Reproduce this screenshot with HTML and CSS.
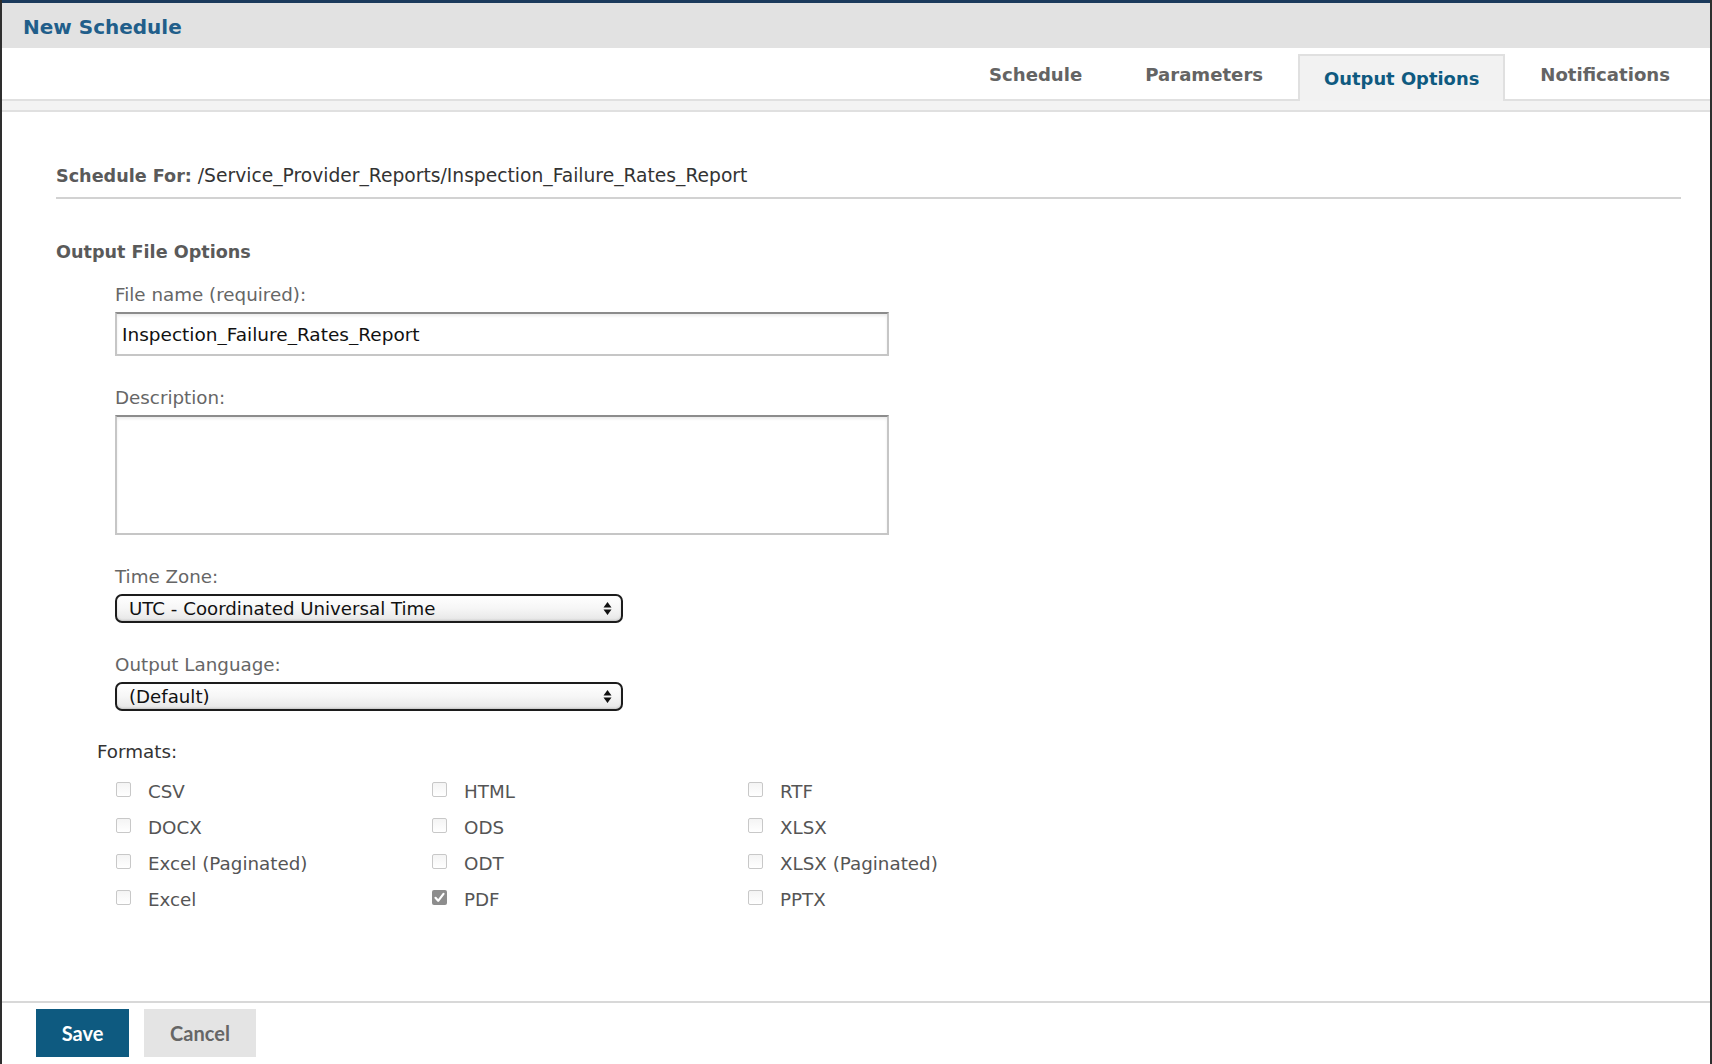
FILE: index.html
```html
<!doctype html>
<html lang="en">
<head>
  <meta charset="UTF-8">
  <meta name="viewport" content="width=device-width, initial-scale=1.0">
  <title>New Schedule</title>
  <link rel="stylesheet" href="styles.css">
</head>
<body>
  <div class="window">
    <div class="title-bar">
      <h1>New Schedule</h1>
    </div>

    <ul class="tabs">
      <li>Schedule</li>
      <li>Parameters</li>
      <li class="active">Output Options</li>
      <li>Notifications</li>
    </ul>
    <div class="tab-strip"></div>

    <div class="content">
      <div class="schedule-for">
        <b>Schedule For:</b> /Service_Provider_Reports/Inspection_Failure_Rates_Report
      </div>

      <h2>Output File Options</h2>

      <div class="fields">
        <label class="field-label first" for="file_name">File name (required):</label>
        <input type="text" id="file_name" class="text-input" value="Inspection_Failure_Rates_Report">

        <label class="field-label" for="description">Description:</label>
        <textarea id="description" class="text-area"></textarea>

        <label class="field-label tz" for="time_zone">Time Zone:</label>
        <div class="select-wrap">
          <select id="time_zone">
            <option>UTC - Coordinated Universal Time</option>
          </select>
          <svg class="arrows" width="9" height="15" viewBox="0 0 9 15">
            <path d="M4.5 1 L8.5 6.5 L0.5 6.5 Z M0.5 8.5 L8.5 8.5 L4.5 14 Z" fill="#111"/>
          </svg>
        </div>

        <label class="field-label lang" for="language">Output Language:</label>
        <div class="select-wrap">
          <select id="language">
            <option>(Default)</option>
          </select>
          <svg class="arrows" width="9" height="15" viewBox="0 0 9 15">
            <path d="M4.5 1 L8.5 6.5 L0.5 6.5 Z M0.5 8.5 L8.5 8.5 L4.5 14 Z" fill="#111"/>
          </svg>
        </div>
      </div>

      <div class="formats-title">Formats:</div>
      <div class="formats">
        <label class="fmt"><span class="box"></span>CSV</label>
        <label class="fmt"><span class="box"></span>HTML</label>
        <label class="fmt"><span class="box"></span>RTF</label>
        <label class="fmt"><span class="box"></span>DOCX</label>
        <label class="fmt"><span class="box"></span>ODS</label>
        <label class="fmt"><span class="box"></span>XLSX</label>
        <label class="fmt"><span class="box"></span>Excel (Paginated)</label>
        <label class="fmt"><span class="box"></span>ODT</label>
        <label class="fmt"><span class="box"></span>XLSX (Paginated)</label>
        <label class="fmt"><span class="box"></span>Excel</label>
        <label class="fmt">
          <span class="box checked">
            <svg width="15" height="15" viewBox="0 0 15 15">
              <path d="M3.5 7.8 L6.2 10.8 L11.5 3.8" fill="none" stroke="#fff" stroke-width="2.2" stroke-linecap="round" stroke-linejoin="round"/>
            </svg>
          </span>PDF
        </label>
        <label class="fmt"><span class="box"></span>PPTX</label>
      </div>
    </div>

    <div class="footer">
      <button class="btn-save">Save</button>
      <button class="btn-cancel">Cancel</button>
    </div>
  </div>
</body>
</html>
```

FILE: styles.css
```css
body {
  margin: 0;
  background: #2e2e2e;
  font-family: 'DejaVu Sans', Verdana, sans-serif;
  font-size: 18.3px;
  color: #333;
}
.window {
  box-sizing: border-box;
  margin: 0 2px;
  height: 100vh;
  background: #fff;
  border-top: 3px solid #1b3a5c;
  display: flex;
  flex-direction: column;
}
.title-bar {
  box-sizing: border-box;
  height: 45px;
  padding: 2px 0 0 21px;
  background: #e2e2e2;
  display: flex;
  align-items: center;
}
.title-bar h1 {
  margin: 0;
  font-size: 20px;
  font-weight: bold;
  color: #215e8a;
}
.tabs {
  list-style: none;
  margin: 0;
  padding: 0 12px 0 0;
  height: 51px;
  border-bottom: 2px solid #e0e0e0;
  display: flex;
  justify-content: flex-end;
}
.tabs li {
  display: flex;
  align-items: center;
  padding: 2px 28px 0;
  margin-left: 7px;
  font-size: 18.1px;
  font-weight: bold;
  color: #646464;
}
.tabs li.active {
  box-sizing: border-box;
  margin-top: 6px;
  margin-bottom: -2px;
  height: 47px;
  padding: 0 24px;
  background: #f2f2f2;
  border: 2px solid #e0e0e0;
  border-bottom: none;
  font-size: 17.9px;
  color: #0f5a80;
}
.tab-strip {
  height: 9px;
  background: #f3f3f3;
  border-bottom: 2px solid #e0e0e0;
}
.content {
  flex: 1;
  padding: 53px 29px 0 54px;
}
.schedule-for {
  font-size: 18.7px;
  line-height: 22px;
  padding-bottom: 10px;
  border-bottom: 2px solid #d2d2d2;
}
.schedule-for b {
  color: #5a5a5a;
  font-size: 17.6px;
}
h2 {
  margin: 42px 0 0;
  font-size: 17.6px;
  line-height: 22px;
  color: #5a5a5a;
}
.fields {
  margin-left: 59px;
  display: flex;
  flex-direction: column;
  align-items: flex-start;
}
.field-label {
  line-height: 22px;
  color: #666;
  margin-top: 31px;
  margin-bottom: 6px;
}
.field-label.first {
  margin-top: 21px;
}
.field-label.tz {
  margin-bottom: 6px;
}
.field-label.lang {
  margin-top: 31px;
  margin-bottom: 6px;
}
.text-input,
.text-area {
  box-sizing: border-box;
  width: 774px;
  border: 2px solid #c6c6c6;
  border-top-color: #8c8c8c;
  box-shadow: inset 0 2px 3px rgba(0, 0, 0, 0.08);
  font-family: inherit;
  font-size: 18.5px;
  color: #111;
  margin: 0;
}
.text-input {
  height: 44px;
  padding: 0 5px;
}
.text-area {
  height: 120px;
  resize: none;
}
.select-wrap {
  position: relative;
  width: 508px;
}
.select-wrap select {
  box-sizing: border-box;
  appearance: none;
  -webkit-appearance: none;
  width: 100%;
  height: 29px;
  margin: 0;
  padding: 0 0 0 12px;
  border: 2px solid #1c1c1c;
  border-radius: 7px;
  background: linear-gradient(#ffffff 0%, #f6f6f6 50%, #e6e6e6 100%);
  box-shadow: inset 0 -1px 2px rgba(0, 0, 0, 0.15);
  font-family: inherit;
  font-size: 18.2px;
  color: #111;
}
.arrows {
  position: absolute;
  right: 11px;
  top: 7px;
  pointer-events: none;
}
.formats-title {
  margin: 30px 0 0 41px;
  line-height: 22px;
  color: #333;
}
.formats {
  margin: 10px 0 0 60px;
  display: grid;
  grid-template-columns: repeat(3, 316px);
}
.fmt {
  height: 36px;
  display: flex;
  align-items: center;
  color: #555;
}
.box {
  box-sizing: border-box;
  width: 15px;
  height: 15px;
  margin: -4px 17px 0 0;
  border: 1px solid #c8c8c8;
  border-radius: 2px;
  background: linear-gradient(#f4f4f4, #ffffff);
}
.box.checked {
  border: none;
  background: #8d8d8d;
}
.box.checked svg {
  display: block;
}
.footer {
  box-sizing: border-box;
  height: 63px;
  border-top: 2px solid #d8d8d8;
  padding: 6px 0 0 34px;
  display: flex;
  align-items: flex-start;
  gap: 15px;
}
.footer button {
  height: 48px;
  border: none;
  border-radius: 0;
  font-family: 'Lato', sans-serif;
  font-weight: bold;
  font-size: 20px;
  cursor: pointer;
}
.btn-save {
  width: 93px;
  background: #0e5a80;
  color: #fff;
}
.btn-cancel {
  width: 112px;
  background: #e4e4e4;
  color: #666;
}
```
